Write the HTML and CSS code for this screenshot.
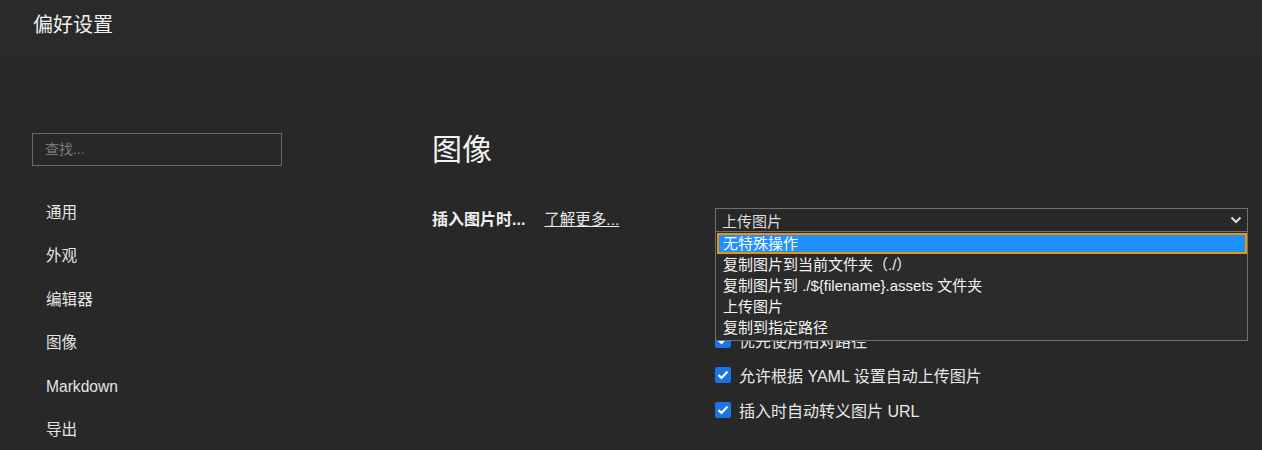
FILE: index.html
```html
<!DOCTYPE html>
<html lang="zh-CN">
<head>
<meta charset="utf-8">
<title>偏好设置</title>
<link rel="stylesheet" href="styles.css">
</head>
<body>
<header class="topbar"><h1 class="title">偏好设置</h1></header>
<div class="main">
  <aside class="sidebar">
    <div class="search">查找...</div>
    <nav class="nav">
      <div class="nav-item">通用</div>
      <div class="nav-item">外观</div>
      <div class="nav-item">编辑器</div>
      <div class="nav-item">图像</div>
      <div class="nav-item">Markdown</div>
      <div class="nav-item">导出</div>
    </nav>
  </aside>
  <section class="content">
    <h2 class="heading">图像</h2>
    <div class="row">
      <div class="label"><b>插入图片时...</b><a class="more">了解更多...</a></div>
      <div class="control">
        <div class="select">
          <span>上传图片</span>
          <svg class="chev" width="12" height="8" viewBox="0 0 12 8"><path d="M1.5 1.5 L6 6 L10.5 1.5" fill="none" stroke="#ddd" stroke-width="2"/></svg>
        </div>
        <div class="dropdown">
          <div class="opt selected">无特殊操作</div>
          <div class="opt">复制图片到当前文件夹（./）</div>
          <div class="opt">复制图片到 ./${filename}.assets 文件夹</div>
          <div class="opt">上传图片</div>
          <div class="opt">复制到指定路径</div>
        </div>
        <div class="checks">
          <div class="check"><span class="box"><svg width="12" height="10" viewBox="0 0 12 10"><path d="M1.5 5 L4.5 8 L10.5 1.5" fill="none" stroke="#fff" stroke-width="2.2"/></svg></span>对本地位置的图片应用上述规则</div>
          <div class="check"><span class="box"><svg width="12" height="10" viewBox="0 0 12 10"><path d="M1.5 5 L4.5 8 L10.5 1.5" fill="none" stroke="#fff" stroke-width="2.2"/></svg></span>对网络位置的图片应用上述规则</div>
          <div class="check"><span class="box"><svg width="12" height="10" viewBox="0 0 12 10"><path d="M1.5 5 L4.5 8 L10.5 1.5" fill="none" stroke="#fff" stroke-width="2.2"/></svg></span>优先使用相对路径</div>
          <div class="check"><span class="box"><svg width="12" height="10" viewBox="0 0 12 10"><path d="M1.5 5 L4.5 8 L10.5 1.5" fill="none" stroke="#fff" stroke-width="2.2"/></svg></span>允许根据 YAML 设置自动上传图片</div>
          <div class="check"><span class="box"><svg width="12" height="10" viewBox="0 0 12 10"><path d="M1.5 5 L4.5 8 L10.5 1.5" fill="none" stroke="#fff" stroke-width="2.2"/></svg></span>插入时自动转义图片 URL</div>
        </div>
      </div>
    </div>
  </section>
</div>
</body>
</html>
```
FILE: styles.css
```css
* { box-sizing: border-box; }
html, body { margin: 0; padding: 0; }
body {
  width: 1262px;
  height: 450px;
  overflow: hidden;
  background: #282828;
  color: #e6e6e6;
  font-family: "Liberation Sans", "Noto Sans CJK SC", sans-serif;
}
.topbar {
  height: 59px;
  background: #2a2a2a;
  border-bottom: 1px solid #242424;
  padding-left: 33px;
}
.title {
  margin: 0;
  font-size: 20px;
  font-weight: normal;
  line-height: 50px;
  color: #f0f0f0;
}
.main { display: flex; }
.sidebar {
  width: 432px;
  padding-left: 32px;
  padding-top: 74px;
  flex: none;
}
.search {
  width: 250px;
  height: 33px;
  border: 1px solid #6b6b6b;
  padding-left: 12px;
  font-size: 14px;
  line-height: 31px;
  color: #7a7a7a;
}
.nav { padding-top: 36px; padding-left: 14px; }
.nav-item {
  font-size: 15.6px;
  height: 43.4px;
  line-height: 22px;
  color: #e4e4e4;
}
.content { flex: 1; padding-top: 69px; padding-right: 14px; }
.heading {
  margin: 0;
  font-size: 30px;
  font-weight: normal;
  line-height: 44px;
  color: #f2f2f2;
}
.row { display: flex; margin-top: 36px; }
.label {
  width: 283px;
  flex: none;
  font-size: 16px;
  line-height: 24px;
  color: #eeeeee;
}
.label b { font-weight: bold; }
.more {
  margin-left: 19px;
  text-decoration: underline;
  font-size: 15.5px;
  color: #e8e8e8;
}
.control { flex: 1; position: relative; }
.select {
  height: 24px;
  border: 1px solid #707070;
  display: flex;
  align-items: center;
  justify-content: space-between;
  padding: 0 5px 0 6px;
  font-size: 15px;
  color: #dcdcdc;
}
.chev { display: block; }
.dropdown {
  position: absolute;
  left: 0;
  right: 0;
  top: 24px;
  background: #2b2b2b;
  border: 1px solid #707070;
  border-top: none;
  padding: 1px 0 2px 1px;
  z-index: 5;
}
.opt {
  height: 21px;
  line-height: 21px;
  font-size: 15px;
  padding-left: 6px;
  color: #f4f4f4;
}
.opt.selected {
  background: #1e90ff;
  border: 2px solid #e8940c;
  line-height: 17px;
  padding-left: 4px;
  color: #fff;
}
.checks { padding-top: 20px; }
.check {
  height: 35px;
  display: flex;
  align-items: center;
  font-size: 16px;
  color: #e8e8e8;
}
.box {
  width: 16px;
  height: 16px;
  border-radius: 2px;
  background: #1a73e8;
  display: flex;
  align-items: center;
  justify-content: center;
  margin-right: 8px;
  flex: none;
}
.box svg { display: block; }
```
